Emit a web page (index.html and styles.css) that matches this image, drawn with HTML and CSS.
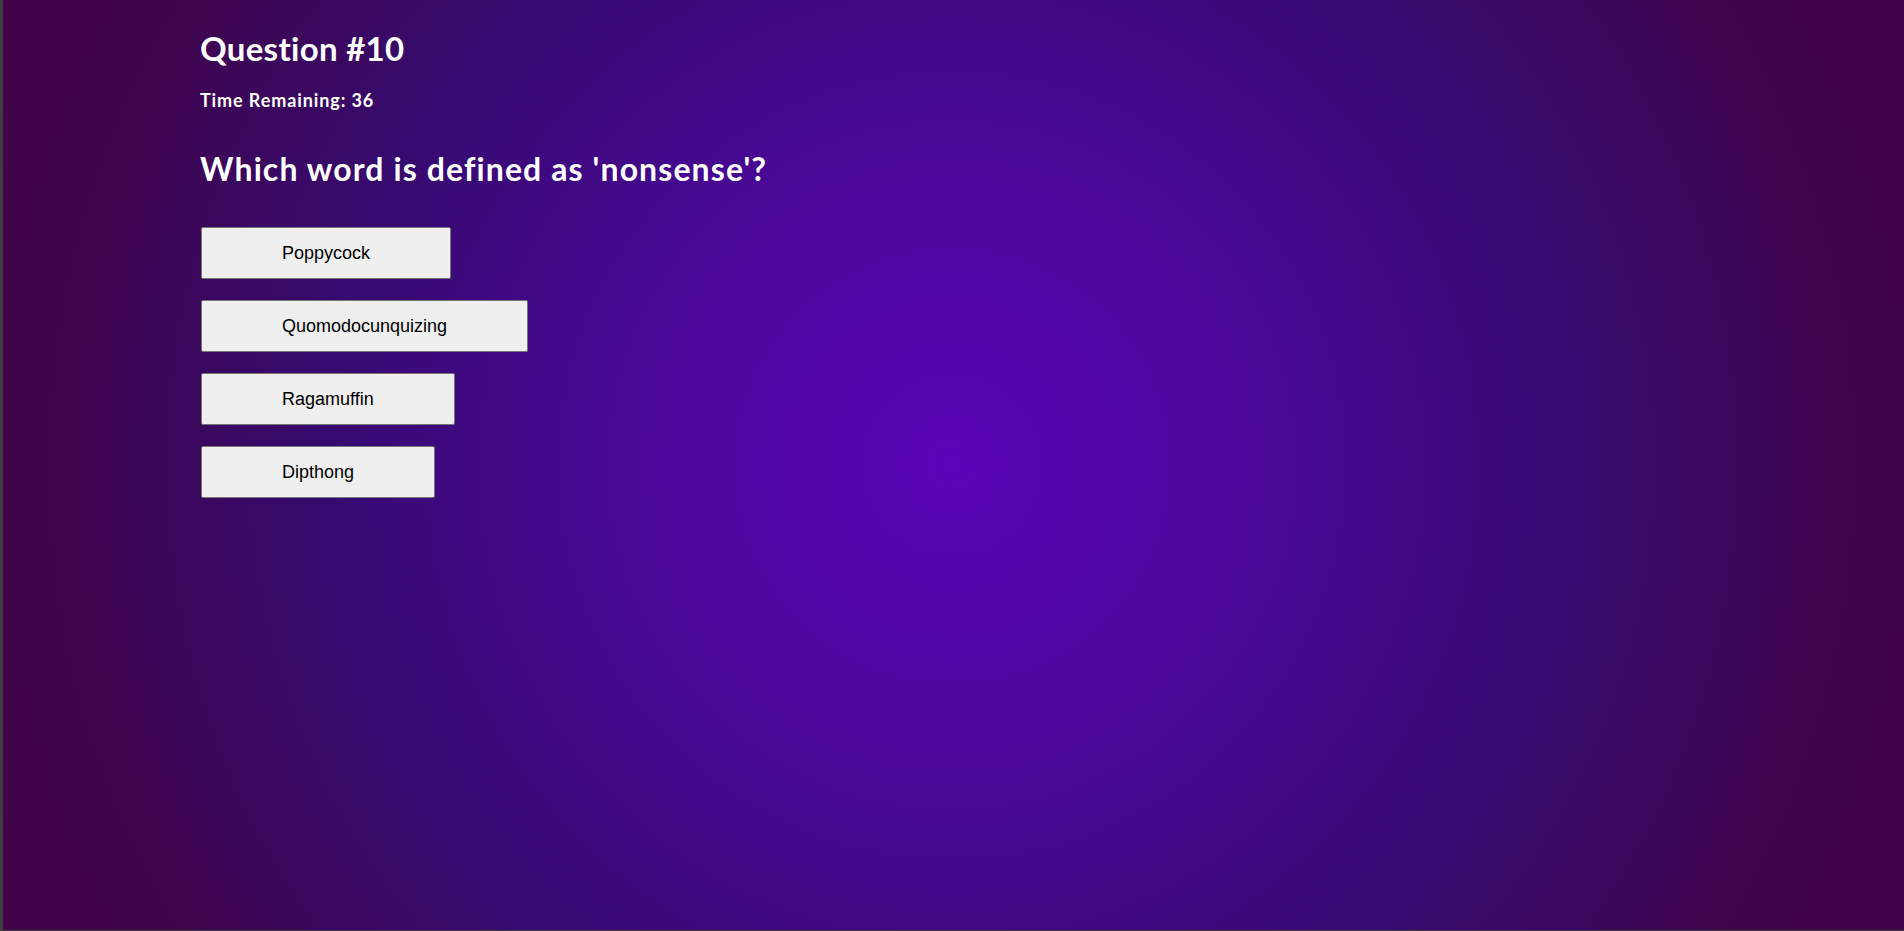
FILE: index.html
```html
<!DOCTYPE html>
<html lang="en">
<head>
<meta charset="utf-8">
<title>Quiz</title>
<link rel="stylesheet" href="styles.css">
</head>
<body>
<main class="quiz">
  <h1 class="q-number">Question #10</h1>
  <h4 class="timer">Time Remaining: 36</h4>
  <h2 class="q-text">Which word is defined as 'nonsense'?</h2>
  <div class="answers">
    <button class="answer">Poppycock</button>
    <button class="answer">Quomodocunquizing</button>
    <button class="answer">Ragamuffin</button>
    <button class="answer">Dipthong</button>
  </div>
</main>
</body>
</html>
```
FILE: styles.css
```css
html, body {
  margin: 0;
  padding: 0;
  height: 100%;
}
body {
  box-sizing: border-box;
  border-left: 3px solid #3b3e40;
  border-bottom: 1px solid #3b3e40;
  background: radial-gradient(circle at 50% 50%, #5b04b8 0%, #4a0898 30%, #360a6e 60%, #40054d 85%, #43034a 100%);
  font-family: "Lato", "Open Sans", sans-serif;
  color: #ffffff;
  overflow: hidden;
}
.quiz {
  padding: 0 0 0 197px;
  display: flex;
  flex-direction: column;
  align-items: flex-start;
}
.q-number {
  font-size: 33px;
  font-weight: 700;
  letter-spacing: 0.3px;
  margin: 28px 0 0 0;
  line-height: 40px;
}
.timer {
  font-size: 18px;
  font-weight: 700;
  letter-spacing: 0.9px;
  margin: 21px 0 0 0;
  line-height: 22px;
}
.q-text {
  font-size: 32px;
  font-weight: 700;
  letter-spacing: 1.1px;
  margin: 39px 0 0 0;
  line-height: 38px;
}
.answers {
  margin-top: 39px;
  display: flex;
  flex-direction: column;
  align-items: flex-start;
  gap: 21px;
  padding-left: 1px;
}
.answer {
  font-family: "Liberation Sans", Arial, sans-serif;
  font-size: 18px;
  line-height: 20px;
  color: #000000;
  background: #efefef;
  border: 1px solid #767676;
  border-radius: 2px;
  padding: 15px 80px;
  margin: 0;
  cursor: pointer;
}
```
